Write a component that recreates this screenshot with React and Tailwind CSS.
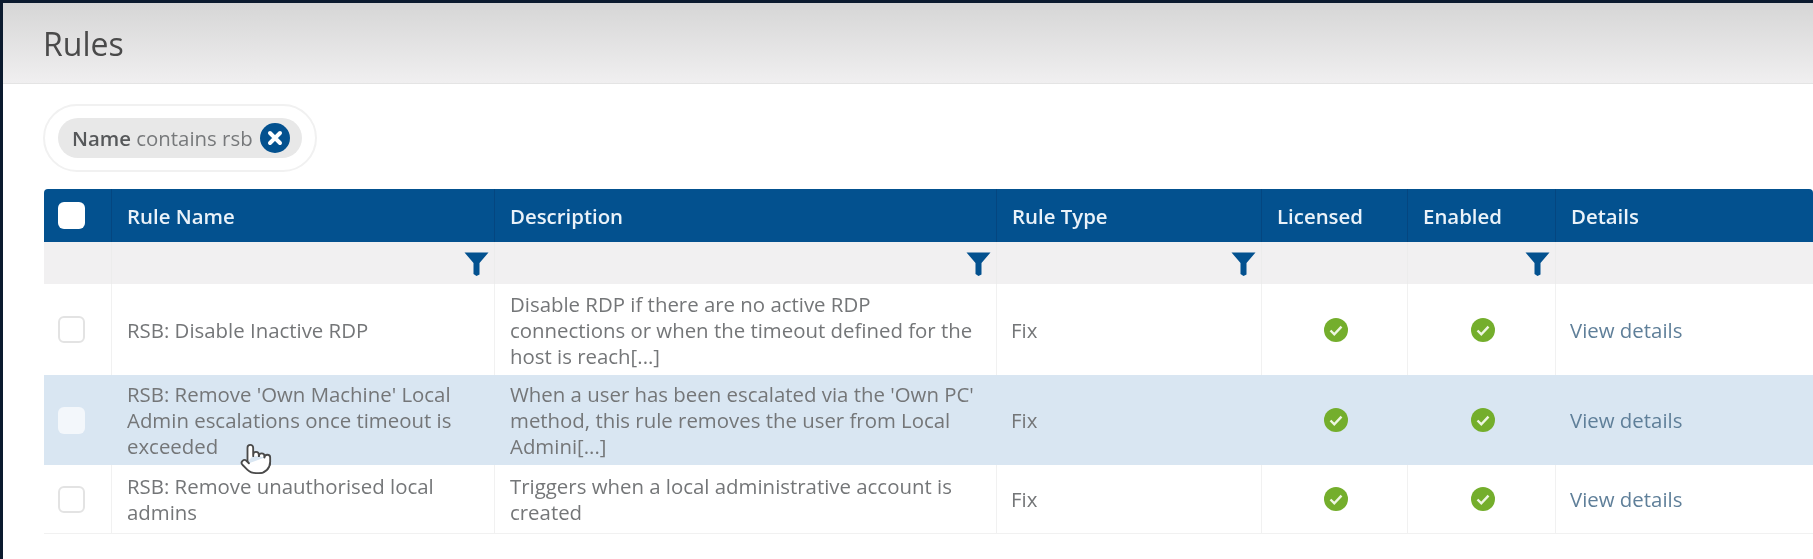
import { Pointer } from 'lucide-react';

const cols = 'grid grid-cols-[68px_383px_502px_265px_146px_148px_1fr]';

const rules = [
  {
    name: 'RSB: Disable Inactive RDP',
    desc: 'Disable RDP if there are no active RDP connections or when the timeout defined for the host is reach[...]',
    h: 'h-[91px]',
  },
  {
    name: "RSB: Remove 'Own Machine' Local Admin escalations once timeout is exceeded",
    desc: "When a user has been escalated via the 'Own PC' method, this rule removes the user from Local Admini[...]",
    h: 'h-[90px]',
    hover: true,
  },
  {
    name: 'RSB: Remove unauthorised local admins',
    desc: 'Triggers when a local administrative account is created',
    h: 'h-[69px] border-b border-[#f1f1f1]',
  },
];

function Funnel() {
  return (
    <svg width="25" height="25" viewBox="0 0 25 25" className="text-[#03518f]">
      <path d="M0.5 1.5h24l-9 10.5v11.5l-3 1.5-3-2v-11z" fill="currentColor" />
    </svg>
  );
}

function Check() {
  return (
    <svg width="24" height="24" viewBox="0 0 24 24" className="ml-[2px]">
      <circle cx="12" cy="12" r="12" fill="#74ae2c" />
      <path d="M6.5 12.5l3.8 3.8 7.2-7.6" fill="none" stroke="#eef6e2" strokeWidth="2.4" />
    </svg>
  );
}

function HeadCell({ children, border = true }) {
  return (
    <div className={`flex items-center pl-[15px] pt-[2px] text-[#eaf2f9] text-[20.4px] font-semibold ${border ? 'border-r border-[#044680]' : ''}`}>
      {children}
    </div>
  );
}

function FilterCell({ show, border = true }) {
  return (
    <div className={`flex justify-end items-center pr-[5px] ${border ? 'border-r border-[#ececec]' : ''}`}>
      {show && <Funnel />}
    </div>
  );
}

function Row({ rule }) {
  const line = rule.hover ? 'border-transparent' : 'border-[#f1f1f1]';
  return (
    <div className={`${cols} ${rule.h} ${rule.hover ? 'bg-[#d9e6f2]' : 'bg-white'} text-[#747678] text-[20.4px] leading-[26px]`}>
      <div className={`flex items-center pl-[14px] border-r ${line}`}>
        <div className={`w-[27px] h-[27px] rounded-md ${rule.hover ? 'bg-[#f3f7fb]' : 'bg-white border-2 border-[#e3e3e3]'}`} />
      </div>
      <div className={`flex items-center pl-[15px] pr-4 border-r ${line}`}>{rule.name}</div>
      <div className={`flex items-center pl-[15px] pr-[20px] border-r ${line}`}>{rule.desc}</div>
      <div className={`flex items-center pl-[14px] border-r ${line}`}>Fix</div>
      <div className={`flex items-center justify-center border-r ${line}`}><Check /></div>
      <div className={`flex items-center justify-center border-r ${line}`}><Check /></div>
      <div className="flex items-center pl-[14px] text-[#5f7f99]">View details</div>
    </div>
  );
}

export default function App() {
  return (
    <div className="relative w-[1813px] h-[559px] overflow-hidden bg-[#0b1a2e] pt-[3px] pl-[3px] font-['Open_Sans',sans-serif]">
      <div className="h-full bg-white blur-[0.6px]">
        <div className="h-[81px] flex items-center pl-[40px] pt-[1px] bg-gradient-to-b from-[#d6d6d6] to-[#f0eff0] border-b border-[#e4e4e4]">
          <h1 className="text-[32px] text-[#4a4a4a]">Rules</h1>
        </div>

        <div className="pl-[40px] pt-[20px]">
          <div className="inline-flex px-[13px] py-[12px] rounded-full border-2 border-[#f1f1f1]">
            <div className="flex items-center h-[40px] pl-[14px] pr-[12px] gap-[7px] rounded-full bg-[#e8e8e8] text-[20.4px]">
              <span className="text-[#56585a] font-semibold">Name <span className="font-normal text-[#77797b]">contains rsb</span></span>
              <span className="flex items-center justify-center w-[30px] h-[30px] rounded-full bg-[#03518f]">
                <svg width="16" height="16" viewBox="0 0 16 16">
                  <path d="M3 3l10 10M13 3L3 13" stroke="#fff" strokeWidth="4" strokeLinecap="round" />
                </svg>
              </span>
            </div>
          </div>
        </div>

        <div className="ml-[41px] mt-[17px]">
          <div className={`${cols} h-[53px] bg-[#03518f] rounded-t-sm`}>
            <div className="flex items-center pl-[14px] border-r border-[#044680]">
              <div className="w-[27px] h-[27px] rounded-md bg-white" />
            </div>
            <HeadCell>Rule Name</HeadCell>
            <HeadCell>Description</HeadCell>
            <HeadCell>Rule Type</HeadCell>
            <HeadCell>Licensed</HeadCell>
            <HeadCell>Enabled</HeadCell>
            <HeadCell border={false}>Details</HeadCell>
          </div>
          <div className={`${cols} h-[42px] bg-[#f1f0f1]`}>
            <FilterCell />
            <FilterCell show />
            <FilterCell show />
            <FilterCell show />
            <FilterCell />
            <FilterCell show />
            <FilterCell border={false} />
          </div>
          {rules.map((rule) => <Row key={rule.name} rule={rule} />)}
        </div>
      </div>

      <Pointer className="absolute left-[239px] top-[442px] w-[34px] h-[34px] text-[#4a4a4a]" fill="#fff" strokeWidth={1.3} />
    </div>
  );
}
